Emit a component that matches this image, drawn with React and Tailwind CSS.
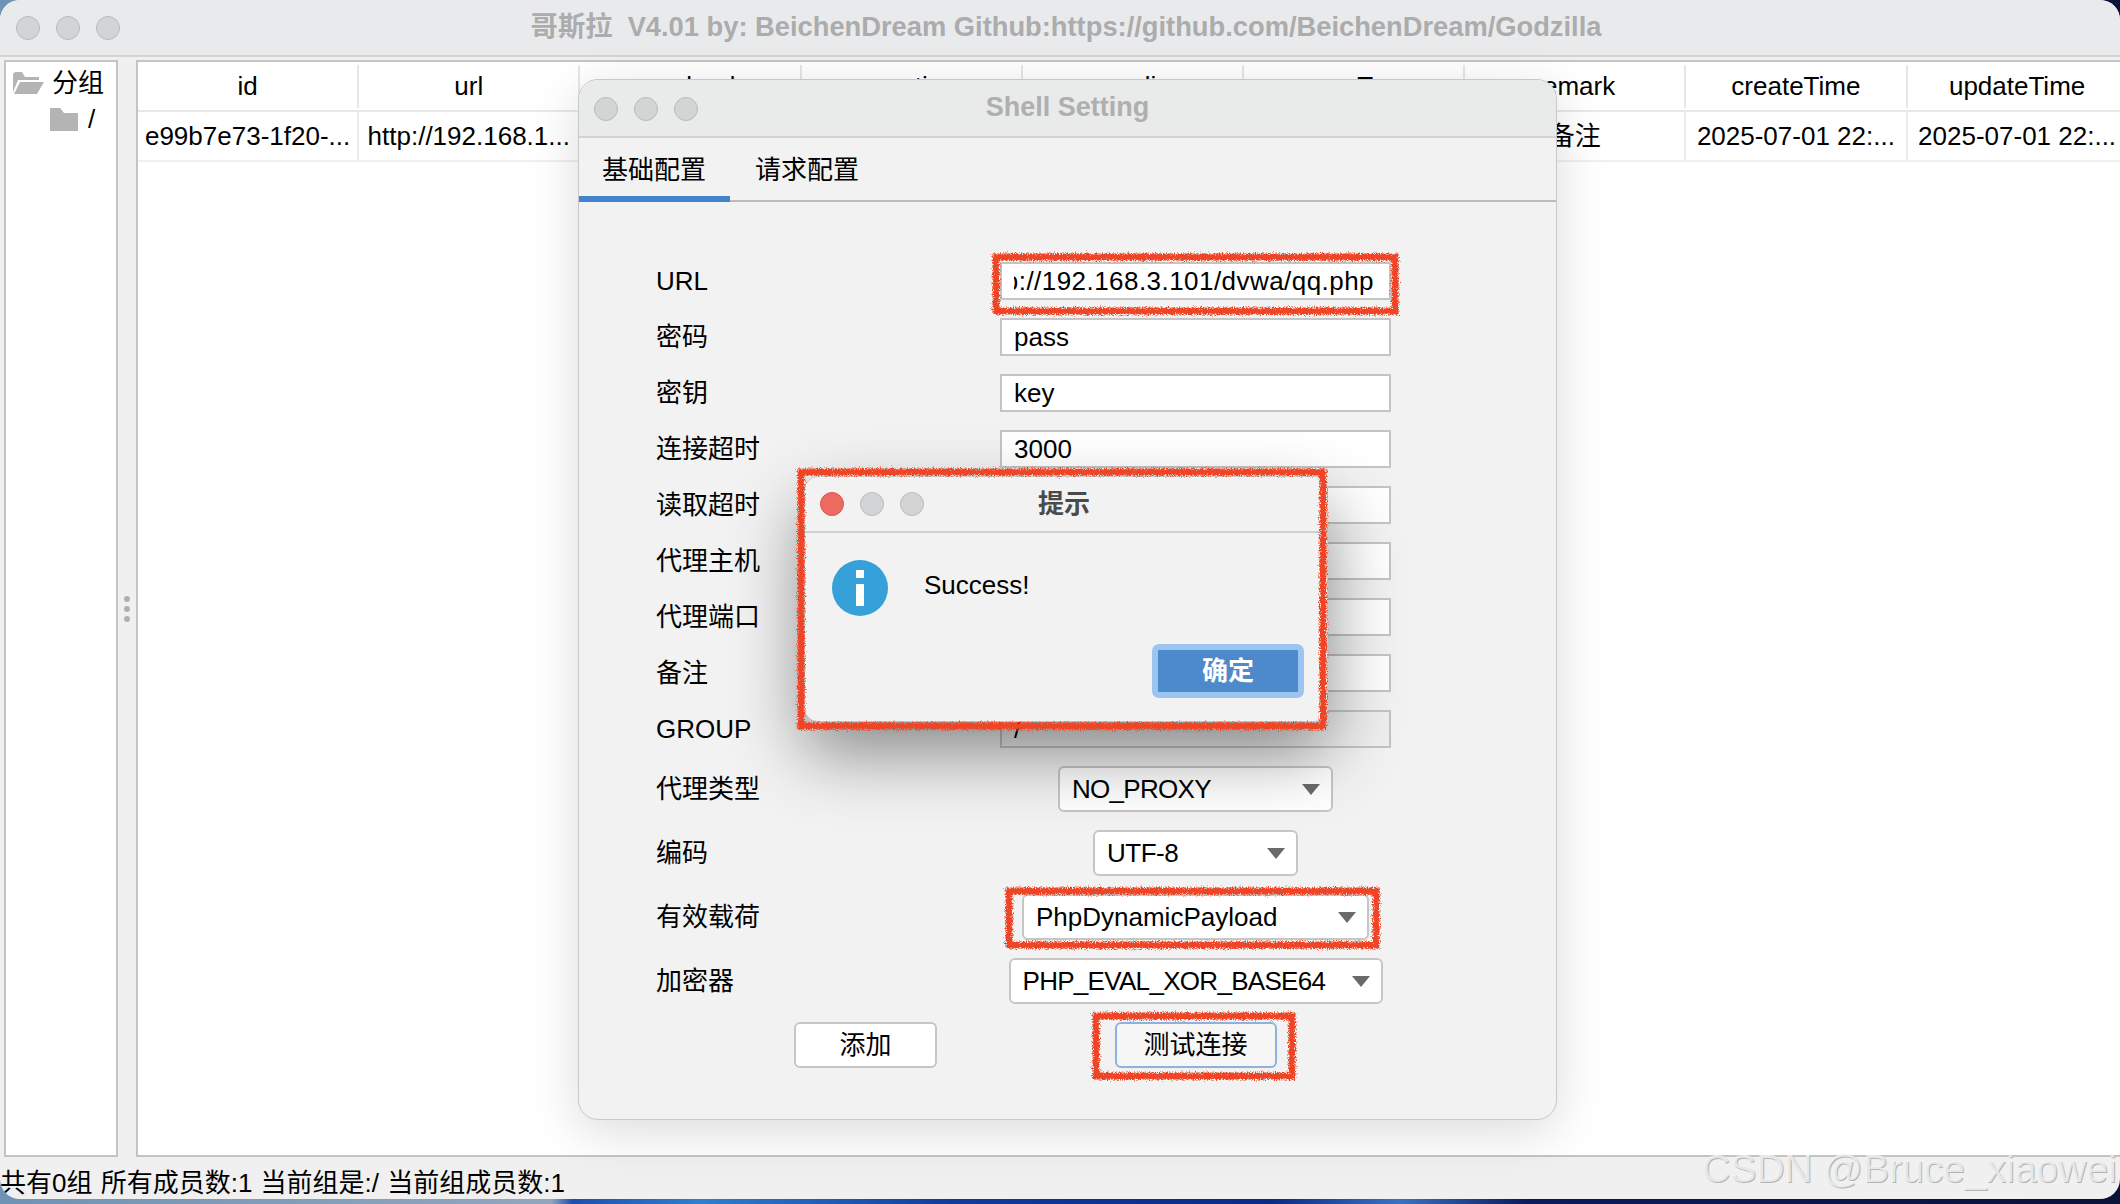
const cols = [
  ["id", "e99b7e73-1f20-..."],
  ["url", "http://192.168.1..."],
  ["payload", "PhpDynamicP..."],
  ["cryption", "PHP_EVAL_XO..."],
  ["encoding", "UTF-8"],
  ["proxyType", "NO_PROXY"],
  ["remark", "备注"],
  ["createTime", "2025-07-01 22:..."],
  ["updateTime", "2025-07-01 22:..."],
];

const fields = [
  ["密码", "pass"],
  ["密钥", "key"],
  ["连接超时", "3000"],
  ["读取超时", "60000"],
  ["代理主机", "127.0.0.1"],
  ["代理端口", "8888"],
  ["备注", "备注"],
];

function Lights({ first = "bg-[#d3d4d5] border-[#b9b9b9]", gap = "gap-[16px]" }) {
  return (
    <div className={`flex items-center ${gap}`}>
      <div className={`w-[24px] h-[24px] rounded-full border ${first}`}></div>
      <div className="w-[24px] h-[24px] rounded-full border bg-[#d3d4d5] border-[#b9b9b9]"></div>
      <div className="w-[24px] h-[24px] rounded-full border bg-[#d3d4d5] border-[#b9b9b9]"></div>
    </div>
  );
}

function Caret() {
  return (
    <svg width="18" height="11" viewBox="0 0 18 11" className="shrink-0">
      <polygon points="0,0 18,0 9,11" fill="#6a6a6a" />
    </svg>
  );
}

function Select({ label, className, tracking = "" }) {
  return (
    <div className={`flex items-center justify-between h-[46px] pl-[12px] pr-[11px] bg-white border-2 border-[#c6c6c6] rounded-[6px] ${className}`}>
      <span className={tracking}>{label}</span>
      <Caret />
    </div>
  );
}

function Row({ label, children, height = "h-[56px]" }) {
  return (
    <div className={`flex items-center ${height}`}>
      <div className="w-[344px] shrink-0">{label}</div>
      <div className="w-[391px] flex justify-center">{children}</div>
    </div>
  );
}

function TextBox({ value, disabled }) {
  return (
    <div className={`w-full h-[38px] flex items-center px-[12px] border-2 border-[#c4c4c4] ${disabled ? "bg-[#efefef]" : "bg-white"}`}>
      {value}
    </div>
  );
}

// hand drawn red marks from the screenshot
function Scribble({ w, h, className }) {
  return (
    <svg width={w} height={h} className={`absolute overflow-visible pointer-events-none ${className}`}>
      <rect x="4" y="4" width={w - 8} height={h - 8} fill="none" stroke="#ee4526" strokeWidth="7" filter="url(#crayon)" />
    </svg>
  );
}

function FolderOpen() {
  return (
    <svg width="31" height="22" viewBox="0 0 31 22">
      <path d="M0 2 L0 20 L5 8 L26 8 L26 5 L12 5 L9 0 L2 0 Z" fill="#b4b4b4" />
      <path d="M7 10 L31 10 L24 22 L1 22 Z" fill="#b4b4b4" />
    </svg>
  );
}

function FolderClosed() {
  return (
    <svg width="28" height="23" viewBox="0 0 28 23">
      <path d="M0 0 L10 0 L14 5 L28 5 L28 23 L0 23 Z" fill="#b4b4b4" />
    </svg>
  );
}

export default function App() {
  return (
    <div className="relative w-[2120px] h-[1204px] overflow-hidden text-[26px] text-black font-['Liberation_Sans','Noto_Sans_CJK_SC',sans-serif] bg-[linear-gradient(90deg,#6f93b4_0%,#93a6bd_26%,#1d4fae_27%,#2f7fd0_33%,#0f3a9c_45%,#0a2a86_60%,#3a72c4_66%,#0a1a5c_72%,#0a1238_100%)]">
      <svg className="absolute w-0 h-0">
        <defs>
          <filter id="crayon" x="-10%" y="-30%" width="120%" height="160%">
            <feTurbulence type="fractalNoise" baseFrequency="0.85" numOctaves="3" seed="4" />
            <feDisplacementMap in="SourceGraphic" scale="7" />
          </filter>
        </defs>
      </svg>

      {/* main window */}
      <div className="flex flex-col h-[1199px] rounded-[20px] overflow-hidden bg-[#f0f0f0]">
        <div className="relative flex items-center justify-center h-[57px] pl-[12px] bg-[#e9eaec] border-b-2 border-[#d4d4d4] shrink-0">
          <div className="absolute left-[16px] top-[16px]"><Lights /></div>
          <span className="font-bold text-[27.3px] text-[#acacac] whitespace-pre">哥斯拉  V4.01 by: BeichenDream Github:https://github.com/BeichenDream/Godzilla</span>
        </div>

        <div className="flex flex-1 min-h-0 pt-[3px] pl-[4px]">
          <div className="w-[114px] shrink-0 bg-white border-2 border-[#c4c4c4] pt-[5px]">
            <div className="flex items-center gap-[8px] pl-[7px] h-[30px] mt-[1px]">
              <FolderOpen />
              <span>分组</span>
            </div>
            <div className="flex items-center gap-[10px] pl-[44px] h-[30px] mt-[6px]">
              <FolderClosed />
              <span>/</span>
            </div>
          </div>

          <div className="w-[18px] shrink-0 flex flex-col items-center justify-center gap-[4px]">
            <div className="w-[6px] h-[6px] rounded-full bg-[#b0b0b0]"></div>
            <div className="w-[6px] h-[6px] rounded-full bg-[#b0b0b0]"></div>
            <div className="w-[6px] h-[6px] rounded-full bg-[#b0b0b0]"></div>
          </div>

          <div className="flex-1 min-w-0 overflow-hidden bg-white border-2 border-r-0 border-[#c4c4c4]">
            <div className="flex h-[50px] pt-[1px] border-b-2 border-[#e8e8e8]">
              {cols.map(([name]) => (
                <div key={name} className="w-[221.2px] shrink-0 my-[2px] flex items-center justify-center border-r-2 border-[#e6e6e6]">{name}</div>
              ))}
            </div>
            <div className="flex h-[50px] border-b-2 border-[#f0f0f0]">
              {cols.map(([name, value]) => (
                <div key={name} className="w-[221.2px] shrink-0 pt-[1px] flex items-center justify-center whitespace-nowrap overflow-hidden border-r-2 border-[#ececec]">{value}</div>
              ))}
            </div>
          </div>
        </div>

        <div className="h-[42px] shrink-0 pt-[11px] leading-[30px] whitespace-pre [word-spacing:1px]">共有0组 所有成员数:1 当前组是:/ 当前组成员数:1</div>
      </div>

      <div className="absolute left-[1702px] top-[1147px] text-[39px] leading-[44px] whitespace-nowrap text-[#f4f4f4]/80 [text-shadow:1px_1px_0_#b4b4b4]">CSDN @Bruce_xiaowei</div>

      {/* Shell Setting window */}
      <div className="absolute left-[578px] top-[79px] w-[979px] h-[1041px] flex flex-col rounded-[20px] overflow-hidden bg-[#f2f2f2] border border-[#c8c8c8] shadow-[0_12px_50px_rgba(0,0,0,0.14)]">
        <div className="relative flex items-center justify-center h-[58px] pb-[2px] shrink-0 bg-[#e9eaea] border-b-2 border-[#d2d2d2]">
          <div className="absolute left-[15px] top-[17px]"><Lights /></div>
          <span className="font-bold text-[27px] text-[#afafaf]">Shell Setting</span>
        </div>

        <div className="flex h-[64px] shrink-0 border-b-2 border-[#bcbcbc]">
          <div className="w-[151px] -mb-[2px] pl-[23px] pt-[13px] border-b-[6px] border-[#4383cc]">基础配置</div>
          <div className="pl-[25px] pt-[13px]">请求配置</div>
        </div>

        <div className="pl-[77px] pt-[51px]">
          <Row label="URL">
            <div className="w-full h-[38px] flex items-center justify-end pr-[15px] pl-[12px] bg-white border-2 border-[#c4c4c4]">
              <div className="overflow-hidden flex justify-end whitespace-nowrap">
                <span className="shrink-0 tracking-[0.45px]">http://192.168.3.101/dvwa/qq.php</span>
              </div>
            </div>
          </Row>
          {fields.map(([label, value]) => (
            <Row key={label} label={label}>
              <TextBox value={value} />
            </Row>
          ))}
          <Row label="GROUP">
            <TextBox value="/" disabled />
          </Row>
          <Row label="代理类型" height="h-[64px]">
            <Select label="NO_PROXY" className="w-[275px]" tracking="tracking-[-0.7px]" />
          </Row>
          <Row label="编码" height="h-[64px]">
            <Select label="UTF-8" className="w-[205px]" tracking="tracking-[-0.5px]" />
          </Row>
          <Row label="有效载荷" height="h-[64px]">
            <Select label="PhpDynamicPayload" className="w-[347px]" />
          </Row>
          <Row label="加密器" height="h-[64px]">
            <Select label="PHP_EVAL_XOR_BASE64" className="w-[374px]" tracking="tracking-[-0.7px]" />
          </Row>
          <div className="flex items-center h-[64px]">
            <div className="w-[344px] shrink-0 pl-[138px]">
              <div className="w-[143px] h-[46px] flex items-center justify-center bg-white border-2 border-[#c6c6c6] rounded-[6px]">添加</div>
            </div>
            <div className="w-[391px] flex justify-center">
              <div className="w-[162px] h-[46px] flex items-center justify-center bg-[#f6f6f6] border-2 border-[#8db2df] rounded-[6px]">测试连接</div>
            </div>
          </div>
        </div>
      </div>

      <Scribble w={407} h={62} className="left-[992px] top-[253px]" />
      <Scribble w={375} h={62} className="left-[1005px] top-[887px]" />
      <Scribble w={204} h={68} className="left-[1092px] top-[1012px]" />

      {/* message box */}
      <div className="absolute left-[804px] top-[476px] w-[524px] h-[246px] flex flex-col rounded-[14px] overflow-hidden bg-[#f2f2f2] border border-[#c8c8c8] shadow-[0_30px_70px_rgba(0,0,0,0.45)]">
        <div className="relative flex items-center h-[56px] shrink-0 pl-[15px] border-b-2 border-[#d0d0d0]">
          <Lights first="bg-[#ec6a5f] border-[#d65a50]" />
          <div className="absolute inset-0 flex items-center justify-center pr-[4px] font-bold text-[#4a4a4a]">提示</div>
        </div>
        <div className="flex items-start pl-[27px] pt-[27px]">
          <div className="relative w-[56px] h-[56px] shrink-0 rounded-full bg-[#36a0d8]">
            <div className="absolute left-[24px] top-[10px] w-[8px] h-[8px] bg-white"></div>
            <div className="absolute left-[24px] top-[24px] w-[8px] h-[22px] bg-white"></div>
          </div>
          <div className="ml-[36px] mt-[10px] leading-[30px]">Success!</div>
        </div>
        <div className="flex justify-end pr-[23px] mt-[28px]">
          <div className="w-[152px] h-[54px] flex items-center justify-center rounded-[7px] border-[6px] border-[#9cc4f0] bg-[#4d8acb] font-bold text-white">确定</div>
        </div>
      </div>

      <Scribble w={530} h={262} className="left-[797px] top-[468px]" />
    </div>
  );
}
